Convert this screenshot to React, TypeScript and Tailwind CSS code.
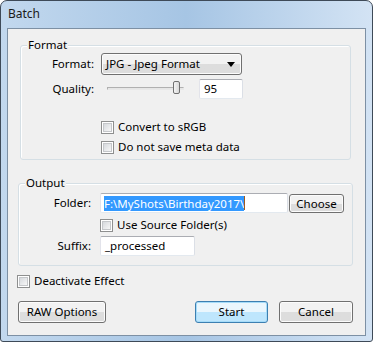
const font = { fontFamily: '"Noto Sans", "Liberation Sans", sans-serif' };

function Checkbox({ label }: { label: string }) {
  return (
    <div className="flex h-[20px] items-center">
      <span className="flex h-[13px] w-[13px] items-center justify-center border border-[#8e8f8f] bg-white">
        <span className="h-[9px] w-[9px] border border-[#c5c7ca] bg-gradient-to-br from-[#d6d9dd] to-[#f7f7f7]" />
      </span>
      <span className="ml-[4px]">{label}</span>
    </div>
  );
}

function Button({ label, primary, className }: { label: string; primary?: boolean; className: string }) {
  return (
    <div
      className={
        "flex items-center justify-center rounded-[3px] border " +
        (primary
          ? "border-[#3c7fb1] bg-gradient-to-b from-[#eaf6fd] from-50% to-[#bee6fd] to-50% shadow-[inset_0_0_0_1px_#a6dcf9] "
          : "border-[#707070] bg-gradient-to-b from-[#f2f2f2] from-50% to-[#dddddd] to-50% shadow-[inset_0_0_0_1px_#fcfcfc] ") +
        className
      }
    >
      {label}
    </div>
  );
}

function TextBox({ children, className }: { children?: React.ReactNode; className: string }) {
  return (
    <div
      className={
        "flex h-[20px] items-center rounded-[2px] border border-t-[#abadb3] border-l-[#e2e3ea] border-r-[#dbdfe6] border-b-[#e3e9ef] bg-white px-[3px] " +
        className
      }
    >
      {children}
    </div>
  );
}

export default function App() {
  return (
    <div
      className="flex h-[342px] w-[373px] flex-col rounded-t-[7px] rounded-b-[3px] border border-[#3e4a58] bg-gradient-to-r from-[#c2d8ee] via-[#a6c5e4] to-[#d3e3f4] px-[6px] pb-[5px] text-[11.5px] text-black"
      style={font}
    >
      {/* Titelleiste */}
      <div className="flex h-[27px] items-center pl-[1px] pb-[2px] text-[12px] text-[#1a1a1a]">Batch</div>

      {/* Client */}
      <div className="flex flex-1 flex-col border border-[#7d90a4] bg-[#f0f0f0]">
        {/* Format */}
        <div className="relative ml-[12px] mt-[16px] flex h-[115px] w-[331px] flex-col rounded-[3px] border border-[#d5dfe5] pt-[7px] shadow-[inset_1px_1px_0_#ffffff]">
          <span className="absolute left-[6px] top-[-9px] bg-[#f0f0f0] px-[1px] leading-[16px]">Format</span>

          <div className="flex h-[22px] items-center">
            <span className="w-[73px] text-right">Format:</span>
            <div className="ml-[7px] flex h-[22px] w-[141px] items-center justify-between rounded-[3px] border border-[#707070] bg-gradient-to-b from-[#f2f2f2] from-50% to-[#dddddd] to-50% pl-[4px] pr-[6px] shadow-[inset_0_0_0_1px_#fcfcfc]">
              <span>JPG - Jpeg Format</span>
              <svg width="8" height="5" viewBox="0 0 8 5">
                <path d="M0 0h8L4 5z" fill="#000" />
              </svg>
            </div>
          </div>

          <div className="mt-[4px] flex h-[20px] items-center">
            <span className="w-[73px] text-right">Quality:</span>
            <div className="relative ml-[7px] h-[20px] w-[90px]">
              <div className="absolute left-[6px] top-[8px] h-[3px] w-[77px] border border-t-[#b0b0b0] border-l-[#b0b0b0] border-b-[#e8e8e8] border-r-[#e8e8e8] bg-[#e6e6e6]" />
              <div className="absolute left-[72px] top-[2px] h-[13px] w-[7px] rounded-[2px] border border-[#707070] bg-gradient-to-r from-[#f4f4f4] to-[#d8d8d8]" />
            </div>
            <TextBox className="ml-[8px] w-[44px]">
              <span className="pl-[1px]">95</span>
            </TextBox>
          </div>

          <div className="ml-[80px] mt-[18px]">
            <Checkbox label="Convert to sRGB" />
            <Checkbox label="Do not save meta data" />
          </div>
        </div>

        {/* Output */}
        <div className="relative ml-[10px] mt-[23px] flex h-[83px] w-[335px] flex-col rounded-[3px] border border-[#d5dfe5] pt-[9px] shadow-[inset_1px_1px_0_#ffffff]">
          <span className="absolute left-[6px] top-[-9px] bg-[#f0f0f0] px-[1px] leading-[16px]">Output</span>

          <div className="flex h-[20px] items-center">
            <span className="w-[72px] text-right">Folder:</span>
            <TextBox className="ml-[9px] w-[188px]">
              <span className="bg-[#3399ff] text-white leading-[15px]">F:\MyShots\Birthday2017\</span>
              <span className="h-[14px] w-[1px] bg-[#a05a1e]" />
            </TextBox>
            <Button label="Choose" className="ml-[1px] mt-[1px] h-[19px] w-[55px]" />
          </div>

          <div className="ml-[81px] mt-[2px]">
            <Checkbox label="Use Source Folder(s)" />
          </div>

          <div className="mt-[1px] flex h-[20px] items-center">
            <span className="w-[72px] text-right">Suffix:</span>
            <TextBox className="ml-[9px] w-[95px]">
              <span className="pl-[1px]">_processed</span>
            </TextBox>
          </div>
        </div>

        <div className="ml-[9px] mt-[5px]">
          <Checkbox label="Deactivate Effect" />
        </div>

        <div className="ml-[10px] mr-[12px] mt-[10px] flex items-center">
          <Button label="RAW Options" className="h-[22px] w-[88px]" />
          <div className="flex-1" />
          <Button label="Start" primary className="h-[22px] w-[73px]" />
          <Button label="Cancel" className="ml-[11px] h-[22px] w-[74px]" />
        </div>
      </div>
    </div>
  );
}
